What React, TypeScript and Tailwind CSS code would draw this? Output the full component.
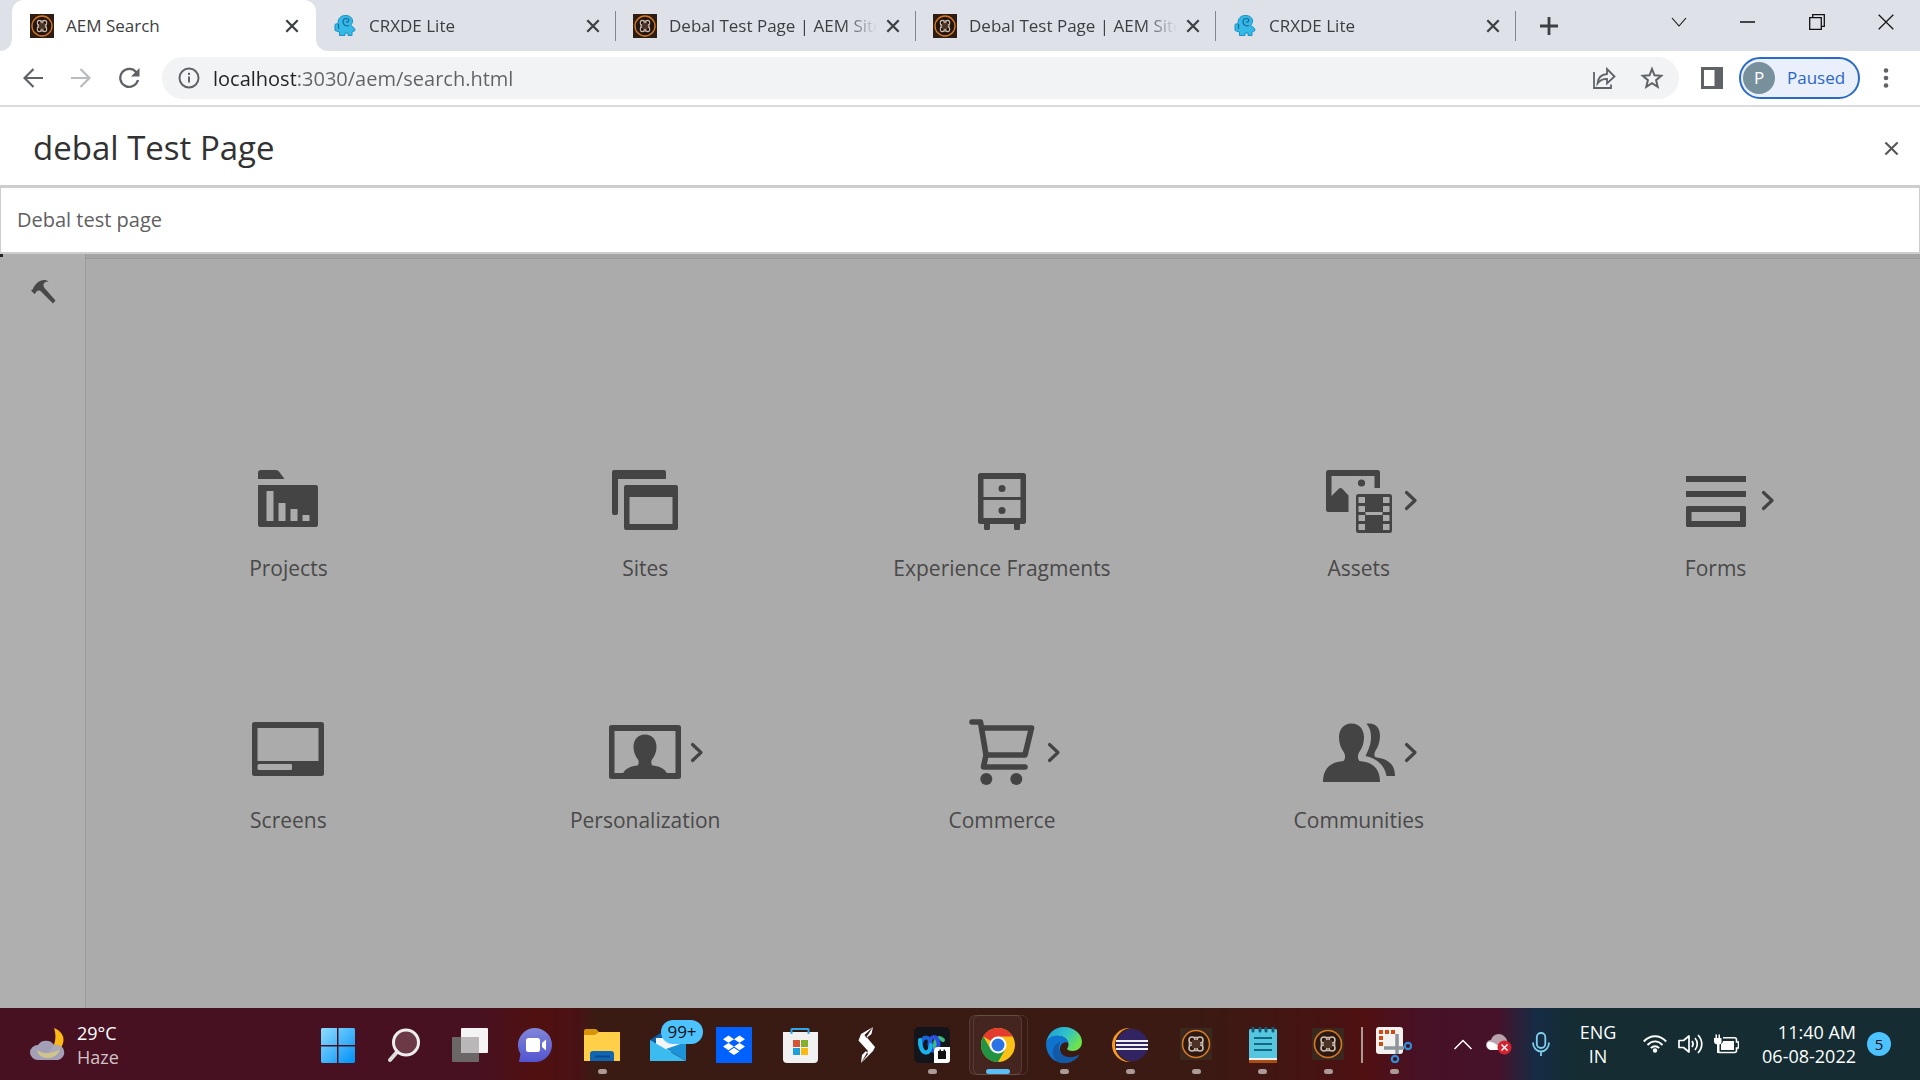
import type { ReactNode } from "react";

const AemFavicon = ({ className }: { className: string }) => (
	<svg viewBox="0 0 24 24" className={className} aria-hidden="true">
		<rect width="24" height="24" fill="#2f1d13" />
		<circle cx="12" cy="12" r="10" fill="#24150f" stroke="#d67a25" strokeWidth="1.3" />
		<g fill="none" stroke="#cdbcae" strokeWidth="1.1">
			<ellipse cx="9.300" cy="8.800" rx="2" ry="2.400" />
			<ellipse cx="14.700" cy="8.800" rx="2" ry="2.400" />
			<ellipse cx="9.300" cy="15.200" rx="2" ry="2.400" />
			<ellipse cx="14.700" cy="15.200" rx="2" ry="2.400" />
			<path d="M8 10v4M16 10v4M10.500 7h3M10.500 17h3" />
		</g>
		<rect x="9.200" y="9.200" width="5.600" height="5.600" fill="#4b3325" />
	</svg>
);

const CrxFavicon = () => (
	<svg viewBox="0 0 24 24" className="h-6 w-6 shrink-0" aria-hidden="true">
		<path
			d="M5 9.500C5 4 8 1.500 12.500 1.500c4.500 0 7 2.500 7 5.500 0 2-1 3.500-2 4.500 2.500 1 4.500 3 4.500 5l-3 1.500v3.500h-4V19h-3v2.500H6.500V18L2 16.500v-6c1-1 2-.5 3-1z"
			fill="#35b9e6"
			stroke="#1c8fc4"
			strokeWidth="1"
		/>
		<path
			d="M16 11.500c-3 1-6-.5-6-3.500 0-2 1.500-3.500 3.500-3.500s3 2 1.800 3.200c-.8.8-2 .3-2-.5M5.500 10v5"
			fill="none"
			stroke="#17699c"
			strokeWidth="1.200"
		/>
	</svg>
);

const Cross = ({ size, stroke }: { size: number; stroke: number }) => (
	<svg width={size} height={size} viewBox="0 0 16 16" aria-hidden="true">
		<path d="M1.500 1.500l13 13M14.500 1.500l-13 13" stroke="currentColor" strokeWidth={stroke} />
	</svg>
);

const tabs = [
	{ title: "CRXDE Lite", crx: true },
	{ title: "Debal Test Page | AEM Sites", crx: false },
	{ title: "Debal Test Page | AEM Sites", crx: false },
	{ title: "CRXDE Lite", crx: true },
];

function TabStrip() {
	return (
		<div className="flex h-[51px] bg-[#dee1e8] text-[17px] text-[#3c4043]">
			<div className="w-3 h-3 self-end bg-white">
				<div className="h-3 bg-[#dee1e8] rounded-br-xl" />
			</div>
			<div className="flex w-[304px] items-center gap-3 rounded-t-xl bg-white py-2 pl-[18px] pr-3">
				<AemFavicon className="h-6 w-6 shrink-0" />
				<span className="flex-1 whitespace-nowrap">AEM Search</span>
				<button type="button" aria-label="Close tab" className="flex h-6 w-6 items-center justify-center">
					<Cross size={14} stroke={2.6} />
				</button>
			</div>
			{tabs.map((tab, i) => (
				<div key={i} className="relative flex w-[300px] items-center gap-3 pl-[17px] pr-3">
					{i === 0 && (
						<div className="absolute bottom-0 left-0 h-3 w-3 bg-white">
							<div className="h-3 rounded-bl-xl bg-[#dee1e8]" />
						</div>
					)}
					{tab.crx ? <CrxFavicon /> : <AemFavicon className="h-6 w-6 shrink-0" />}
					<span className="w-[208px] shrink-0 overflow-hidden whitespace-nowrap [mask-image:linear-gradient(90deg,#000_84%,transparent)]">
						{tab.title}
					</span>
					<button type="button" aria-label="Close tab" className="-ml-2 flex h-6 w-6 shrink-0 items-center justify-center">
						<Cross size={14} stroke={2.6} />
					</button>
					<span className="absolute right-0 h-[30px] w-px bg-[#80868b]" />
				</div>
			))}
			<button type="button" aria-label="New tab" className="flex w-[66px] items-center justify-center">
				<svg width="18" height="18" viewBox="0 0 18 18">
					<path d="M9 0v18M0 9h18" stroke="#3c4043" strokeWidth="2.800" />
				</svg>
			</button>
			<div className="ml-auto flex h-[43px] text-[#111]">
				<button type="button" aria-label="Search tabs" className="flex w-[69px] items-center justify-center">
					<svg width="16" height="10" viewBox="0 0 16 10">
						<path d="M1 1l7 8 7-8" fill="none" stroke="currentColor" strokeWidth="1.100" />
					</svg>
				</button>
				<button type="button" aria-label="Minimize" className="flex w-[69px] items-center justify-center">
					<svg width="15" height="2" viewBox="0 0 15 2">
						<path d="M0 1h15" stroke="currentColor" strokeWidth="1.500" />
					</svg>
				</button>
				<button type="button" aria-label="Restore" className="flex w-[69px] items-center justify-center">
					<svg width="16" height="16" viewBox="0 0 16 16">
						<path d="M.7 3.700h11.600v11.600H.7zM3.700 3.500V.7h11.600v11.600h-3" fill="none" stroke="currentColor" strokeWidth="1.300" />
					</svg>
				</button>
				<button type="button" aria-label="Close window" className="flex w-[69px] items-center justify-center">
					<Cross size={18} stroke={1.1} />
				</button>
			</div>
		</div>
	);
}

function Toolbar() {
	return (
		<div className="flex h-14 items-center border-b-2 border-[#dadce0] bg-white pl-[9px] pr-2 text-[#5f6368]">
			<button type="button" aria-label="Back" className="flex w-12 justify-center">
				<svg width="20" height="20" viewBox="0 0 20 20" fill="none" stroke="currentColor" strokeWidth="2.200">
					<path d="M20 10H2M10.500 1L1.500 10l9 9" />
				</svg>
			</button>
			<button type="button" aria-label="Forward" disabled className="flex w-12 justify-center text-[#b9bbbe]">
				<svg width="20" height="20" viewBox="0 0 20 20" fill="none" stroke="currentColor" strokeWidth="2.200">
					<path d="M0 10h18M9.500 1l9 9-9 9" />
				</svg>
			</button>
			<button type="button" aria-label="Reload" className="flex w-12 justify-center">
				<svg width="22" height="22" viewBox="0 0 22 22" fill="none" stroke="currentColor" strokeWidth="2.300">
					<path d="M18.500 5.500A9 9 0 1 0 20 13" />
					<path d="M21.500 1v8.500H13z" fill="currentColor" stroke="none" />
				</svg>
			</button>
			<div className="ml-[9px] flex h-[42px] flex-1 items-center rounded-full bg-[#f1f3f4] pl-4 pr-3">
				<svg width="22" height="22" viewBox="0 0 22 22" fill="none" stroke="currentColor" strokeWidth="2">
					<circle cx="11" cy="11" r="9.500" />
					<path d="M11 9.500v6M11 5.800v2.200" />
				</svg>
				<input
					aria-label="Address"
					defaultValue="localhost:3030/aem/search.html"
					className="ml-[13px] min-w-0 flex-1 bg-[linear-gradient(90deg,#202124_83px,#5f6368_83px)] bg-clip-text pt-0.5 text-[20px] leading-8 text-transparent outline-none"
				/>
				<button type="button" aria-label="Share" className="flex w-12 justify-center">
					<svg width="24" height="24" viewBox="0 0 24 24" fill="none" stroke="currentColor" strokeWidth="1.800">
						<path d="M2 6v16h17v-3.500" />
						<path d="M5.500 17.500c.5-5.500 3.500-9 9.500-9.500V3l7.500 7.500L15 17.500v-4.700c-4 0-7 1.200-9.500 4.700z" />
					</svg>
				</button>
				<button type="button" aria-label="Bookmark" className="ml-3 mr-[3px] flex w-6 justify-center">
					<svg width="24" height="24" viewBox="0 0 24 24" fill="none" stroke="currentColor" strokeWidth="2">
						<path d="M12 3l2.500 6.300 6.700.5-5.100 4.400 1.600 6.600L12 17.200l-5.700 3.600 1.600-6.600-5.100-4.400 6.700-.5z" />
					</svg>
				</button>
			</div>
			<button type="button" aria-label="Side panel" className="ml-[22px] flex w-[22px] justify-center">
				<svg width="22" height="22" viewBox="0 0 22 22">
					<path d="M0 0h22v22H0zM3 3v16h10.500V3z" fill="currentColor" fillRule="evenodd" />
				</svg>
			</button>
			<button
				type="button"
				className="ml-4 flex h-[42px] w-[121px] items-center gap-3 rounded-full border-2 border-[#2a6bc9] bg-[#e9f0fc] pl-0.5 text-[17px] text-[#2a66c8]"
			>
				<span className="flex h-8 w-8 items-center justify-center rounded-full bg-[#78909c] text-white">P</span>
				Paused
			</button>
			<button type="button" aria-label="Menu" className="flex w-[52px] justify-center">
				<svg width="6" height="20" viewBox="0 0 6 20" fill="currentColor">
					<circle cx="3" cy="2.500" r="2.300" />
					<circle cx="3" cy="10" r="2.300" />
					<circle cx="3" cy="17.500" r="2.300" />
				</svg>
			</button>
		</div>
	);
}

const apps: { label: string; more?: boolean; icon: ReactNode }[] = [
	{
		label: "Projects",
		icon: (
			<>
				<path d="M6 15V9q0-3 3-3h15q2 0 3 1.500L32.500 15z" />
				<path
					fillRule="evenodd"
					d="M6 21h57.500q2.500 0 2.500 2.500v37q0 2.500-2.500 2.500h-55Q6 63 6 60.500zM14.500 27v30h7V27zM26.500 39v18h7V39zM38.500 45v12h7V45zM50.500 51v6h7v-6z"
				/>
			</>
		),
	},
	{
		label: "Sites",
		icon: (
			<>
				<path d="M5 6h50q2 0 2 2v7H9v34q0 2-2 2H5q-2 0-2-2V8q0-2 2-2z" />
				<path fillRule="evenodd" d="M17 21h50q2 0 2 2v41q0 2-2 2H17q-2 0-2-2V23q0-2 2-2zM20.500 33v27h43V33z" />
			</>
		),
	},
	{
		label: "Experience Fragments",
		icon: (
			<>
				<path
					fillRule="evenodd"
					d="M14.500 9h43q2.500 0 2.500 2.500v46q0 2.500-2.500 2.500H54v4.500q0 1.500-1.500 1.500h-3q-1.500 0-1.500-1.500V60H24v4.500q0 1.500-1.500 1.500h-3q-1.500 0-1.500-1.500V60h-3.500Q12 60 12 57.500v-46Q12 9 14.500 9zM17.500 15v18h37V15zM17.500 36v18h37V36z"
				/>
				<circle cx="36" cy="24.500" r="3.500" />
				<circle cx="36" cy="46.500" r="3.500" />
			</>
		),
	},
	{
		label: "Assets",
		more: true,
		icon: (
			<>
				<path d="M5.500 6h49Q57 6 57 8.500V24h-5.500V12h-43v20l7-7q2-2 4 0l6 6.500V48H5.500Q3 48 3 45.500v-37Q3 6 5.500 6z" />
				<circle cx="38.500" cy="19" r="3.600" />
				<path
					fillRule="evenodd"
					d="M35.500 30h31q2.500 0 2.500 2.500v34q0 2.500-2.500 2.500h-31Q33 69 33 66.500v-34q0-2.500 2.500-2.500zM35.500 33v6h6.500v-6zM35.500 42v6h6.500v-6zM35.500 51v6h6.500v-6zM35.500 60v6h6.500v-6zM60 33v6h6.500v-6zM60 42v6h6.500v-6zM60 51v6h6.500v-6zM60 60v6h6.500v-6zM42.500 48v3h17v-3z"
				/>
			</>
		),
	},
	{
		label: "Forms",
		more: true,
		icon: (
			<>
				<path d="M6 12h60v6H6zM6 27h60v6H6z" />
				<path fillRule="evenodd" d="M7.500 42h57q1.500 0 1.500 1.500v18q0 1.500-1.500 1.500h-57Q6 63 6 61.500v-18Q6 42 7.500 42zM11.500 48v9H60v-9z" />
			</>
		),
	},
	{
		label: "Screens",
		icon: (
			<path
				fillRule="evenodd"
				d="M2.500 6h67Q72 6 72 8.500v49q0 2.500-2.500 2.500h-67Q0 60 0 57.500v-49Q0 6 2.500 6zM5.500 12v33h61V12zM7 48q-1.500 0-1.500 1.500v3Q5.500 54 7 54h32q1 0 1-1v-4q0-1-1-1z"
			/>
		),
	},
	{
		label: "Personalization",
		more: true,
		icon: (
			<>
				<path fillRule="evenodd" d="M2.500 9h67Q72 9 72 11.500v49q0 2.500-2.500 2.500h-67Q0 63 0 60.500v-49Q0 9 2.500 9zM5.500 15v42h61V15z" />
				<path d="M36 18.500c-7 0-11.500 5-11.500 12.500 0 5 2 9.500 4.500 12.500 1 1.500 1 4.500-.5 6-6 .5-12 2.500-14.500 8h44c-2.500-5.500-8.500-7.500-14.500-8-1.500-1.500-1.500-4.500-.5-6 2.500-3 4.500-7.500 4.500-12.500 0-7.500-4.500-12.500-11.500-12.500z" />
			</>
		),
	},
	{
		label: "Commerce",
		more: true,
		icon: (
			<>
				<g fill="none" stroke="currentColor" strokeWidth="5.600" strokeLinecap="round" strokeLinejoin="round">
					<path d="M6 6h8.500L20 39h39l6.500-27H16.500M20 39l-2.500 12H59" />
				</g>
				<circle cx="20.300" cy="63" r="6" />
				<circle cx="50.300" cy="63" r="6" />
			</>
		),
	},
	{
		label: "Communities",
		more: true,
		icon: (
			<>
				<path d="M28.500 7.500c-7.500 0-12.500 5.500-12.500 14 0 6 2 11 5 15 1.500 2.500 1.500 6-.5 8.500C8 46 0 52 0 66h57c0-14-8-20-20.500-21-2-2.500-2-6-.5-8.500 3-4 5-9 5-15 0-8.500-5-14-12.500-14z" />
				<path d="M43.500 7.800c9-1.500 13.500 4 13.500 12 0 6.500-2 11-4.500 15-1.500 2.500-1.500 5 0 6.500C65 43 72 48 72 60h-8.500C62 50 54 42 42.500 40c4-8 5.500-13 5.500-19 0-5.500-1.500-10-4.500-13.200z" />
			</>
		),
	},
];

function SearchOverlay() {
	return (
		<div className="bg-white">
			<div className="flex h-[78px] items-center pl-[33px] pr-[17px] pt-1">
				<input
					aria-label="Search"
					defaultValue="debal Test Page"
					className="min-w-0 flex-1 text-[33px] leading-[48px] text-[#323232] outline-none"
				/>
				<button type="button" aria-label="Close search" className="flex h-6 w-6 items-center justify-center text-[#555]">
					<Cross size={15} stroke={2.2} />
				</button>
			</div>
			<button
				type="button"
				className="block h-[69px] w-full border border-b-2 border-t-3 border-[#cdcdcd] pl-4 text-left text-[20px] text-[#606060]"
			>
				Debal test page
			</button>
		</div>
	);
}

function Navigation() {
	return (
		<main className="flex flex-1 bg-[#ababab]">
			<nav className="relative w-[86px] shrink-0 border-r border-[#9b9b9b] bg-[#afafaf]">
				<span className="absolute left-0 top-0 h-[3px] w-[3px] bg-[#222]" />
				<button type="button" aria-label="Tools" className="ml-[31px] mt-[26px] block text-[#484848]">
					<svg width="25" height="24" viewBox="0 0 25 24" fill="currentColor">
						<path d="M0 10.500L2 9l.5-1.500C5 3 9 0 13 0c1.800 0 3 .5 4.500 1.500-3 0-4.500 1-5 3-.2 1.500.3 2.500 1 3.500L24.500 20.500l-2.500 3L9.500 11c-1.500-.8-3-.3-4 .5l-.5 1-1.500 1.500z" />
					</svg>
				</button>
			</nav>
			<div className="flex-1">
				<div className="h-[5px] border-b border-[#9b9b9b] bg-[#a4a4a4]" />
				<ul className="grid grid-cols-5 gap-y-[134px] pl-6 pr-[26px] pt-[205px]">
					{apps.map((app) => (
						<li key={app.label}>
							<a href="#" className="flex flex-col items-center text-[#494949]">
								<span className="relative text-[#444]">
									<svg width="72" height="72" viewBox="0 0 72 72" fill="currentColor" aria-hidden="true">
										{app.icon}
									</svg>
									{app.more && (
										<svg
											className="absolute left-20 top-6"
											width="16"
											height="25"
											viewBox="0 0 16 25"
											fill="none"
											stroke="currentColor"
											strokeWidth="3.200"
											strokeLinecap="round"
											strokeLinejoin="round"
										>
											<path d="M3.500 4.500l8.500 8-8.500 8" />
										</svg>
									)}
								</span>
								<span className="mt-[18px] whitespace-nowrap text-[21px] leading-7">{app.label}</span>
							</a>
						</li>
					))}
				</ul>
			</div>
		</main>
	);
}

const pinned: { name: string; running?: boolean; active?: boolean; icon: ReactNode }[] = [
	{
		name: "Start",
		icon: (
			<>
				<defs>
					<linearGradient id="win" x2="1" y2="1">
						<stop stopColor="#8fdcff" />
						<stop offset="1" stopColor="#0091f7" />
					</linearGradient>
				</defs>
				<path d="M2 1h15v17H1V2zM18.500 1H34l1 1v16H18.500zM1 19.500h16V36H2l-1-1zM18.500 19.500H35V35l-1 1H18.500z" fill="url(#win)" />
			</>
		),
	},
	{
		name: "Search",
		icon: (
			<>
				<path d="M11 25L4 33" stroke="#ddd" strokeWidth="4" strokeLinecap="round" />
				<circle cx="20" cy="15.500" r="12.500" fill="#6b3a46" stroke="#eee" strokeWidth="3" />
			</>
		),
	},
	{
		name: "Task view",
		icon: (
			<>
				<rect x="9" y="1" width="27" height="25" rx="1" fill="#f4f4f4" />
				<rect x="0" y="10" width="27" height="25" rx="1" fill="#6c6767" />
				<path d="M9 10h18v16H9z" fill="#b9b7b7" />
			</>
		),
	},
	{
		name: "Chat",
		icon: (
			<>
				<defs>
					<linearGradient id="chat" x2="0" y2="1">
						<stop stopColor="#8086d8" />
						<stop offset="1" stopColor="#5355cf" />
					</linearGradient>
				</defs>
				<path d="M1 35l1.500-8A17 17 0 1 1 18 35z" fill="url(#chat)" />
				<rect x="8" y="11" width="14" height="14" rx="2.500" fill="#fff" />
				<path d="M24 16l4-3.500v11L24 20z" fill="#fff" />
			</>
		),
	},
	{
		name: "File Explorer",
		running: true,
		icon: (
			<>
				<path d="M0 4q0-2 2-2h10l4 4v6H0z" fill="#d9950a" />
				<path d="M0 8h11l4-3h21v29H0z" fill="#ffcf48" />
				<path d="M6 34V27q0-3 3-3h18q3 0 3 3v7z" fill="#1166b4" />
				<path d="M11 29.500h15" stroke="#0a4a8c" strokeWidth="2" />
			</>
		),
	},
	{
		name: "Mail",
		icon: (
			<>
				<path d="M0 13L15 3h8l13 10v8H0z" fill="#0f5ea8" />
				<path d="M6 11h24v10l-12 6L6 17z" fill="#f2f5f8" />
				<path d="M0 13l36 21H0z" fill="#3bbcf0" />
				<path d="M36 15v19L16 22z" fill="#1c93d8" />
			</>
		),
	},
	{
		name: "Dropbox",
		icon: (
			<>
				<path d="M0 0h36v36H0z" fill="#0061fe" />
				<path
					d="M12.500 8.500l5.500 3.700-5.500 3.600L7 12.200zM23.500 8.500l5.500 3.700-5.500 3.600-5.500-3.600zM12.500 16l5.500 3.600-5.500 3.600L7 19.600zM23.500 16l5.500 3.600-5.500 3.600-5.500-3.600zM18 20.800l5.500 3.600L18 28l-5.500-3.600z"
					fill="#fff"
				/>
			</>
		),
	},
	{
		name: "Microsoft Store",
		icon: (
			<>
				<path d="M1 5h35v27q0 4-4 4H5q-4 0-4-4z" fill="#f1f1f1" />
				<path d="M9.500 7V2.500q0-.5.5-.5h16q.5 0 .5.500V7" fill="none" stroke="#2ba7e6" strokeWidth="2" />
				<path d="M11 13h7v7h-7z" fill="#d4553a" />
				<path d="M19 13h7v7h-7z" fill="#84b02e" />
				<path d="M11 21h7v7h-7z" fill="#1ba0dc" />
				<path d="M19 21h7v7h-7z" fill="#fbb811" />
			</>
		),
	},
	{
		name: "Skyline",
		icon: (
			<path d="M25 0L13 7l-2.500 6.500L20 24l-7 12 12-12 2-4-8.500-10zM25 0l-1.500 7-5 4-2-3zM13 36l1-8 4-4 2 3z" fill="#fff" />
		),
	},
	{
		name: "Webex",
		running: true,
		icon: (
			<>
				<rect width="36" height="36" rx="5" fill="#14151a" />
				<g fill="none" strokeWidth="4" strokeLinecap="round">
					<path d="M29 13c-4-4-8-1-8 5 0 3-1 5-3 5" stroke="#3dbb7c" />
					<ellipse cx="20" cy="17" rx="4.500" ry="7" stroke="#2b4fe6" />
					<ellipse cx="12" cy="18" rx="5" ry="7.500" stroke="#1c62d8" />
					<path d="M6 13c-.5 6 2 12.500 6 12.500 3 0 4.500-4 4.800-7.500" stroke="#18b4e8" />
				</g>
				<path d="M24 20h12v13q0 3-3 3H20V24q0-4 4-4z" fill="#fff" />
				<path d="M24 24h8v8h-8zM25.500 22.500h1.500v2h-1.500zM29.500 22.500H31v2h-1.500z" fill="#111" />
			</>
		),
	},
	{
		name: "Chrome",
		active: true,
		icon: (
			<>
				<circle cx="18" cy="18" r="17" fill="#fbc116" />
				<path d="M18 18L3.300 9.500A17 17 0 0 1 32.700 9.500H18z" fill="#e33b2e" />
				<path d="M3.300 9.500A17 17 0 0 0 18 35l7.400-12.800L18 26 10.600 22z" fill="#229342" />
				<circle cx="18" cy="18" r="8.500" fill="#fff" />
				<circle cx="18" cy="18" r="6.500" fill="#2a74e8" />
			</>
		),
	},
	{
		name: "Edge",
		running: true,
		icon: (
			<>
				<defs>
					<linearGradient id="edge" x2="1" y2=".5">
						<stop stopColor="#1598dc" />
						<stop offset=".6" stopColor="#33c6c6" />
						<stop offset="1" stopColor="#6ee34a" />
					</linearGradient>
				</defs>
				<path d="M0 17C1 7 8 0 18 0s18 7 18 15c0 6-5 9-9.500 9-3.500 0-5.500-1.500-5.500-2.500 1-1 1.500-2.500 1.500-4C22.500 12 17 8.500 11 9 5 9.500 1 13 0 17z" fill="url(#edge)" />
				<path d="M0 17c1-5 5-8.500 11-8.500 6 0 11 3.500 11.500 8C21 14 14 15 14 22c0 5 4 9 10 9 4 0 7-2 9.500-3.500C30 33 25 36 18 36 8 36 0 28 0 17z" fill="#0e74d0" />
				<path d="M14 35.500C8 33 6 28 7 23c.7-3.500 3-7 7.500-8-3 4-1.500 8 0 10.500 3.500 5 11 6.500 19 2C30 33 22 37.500 14 35.500z" fill="#1459a6" />
			</>
		),
	},
	{
		name: "Eclipse",
		running: true,
		icon: (
			<>
				<circle cx="17" cy="18" r="17" fill="#f79a26" />
				<circle cx="20" cy="18" r="17" fill="#3e1b12" />
				<circle cx="20" cy="18" r="16" fill="#322463" />
				<path d="M4 14h32M4 18h32M4 22h32" stroke="#f3f1f8" strokeWidth="2" />
			</>
		),
	},
	{ name: "AEM author", running: true, icon: <AemTile /> },
	{
		name: "Notepad",
		running: true,
		icon: (
			<>
				<path d="M5 32h28v4H5z" fill="#a94f14" />
				<path d="M5 30h28v3H5z" fill="#eee" />
				<path d="M6 2h26l1 1v28H5V3z" fill="#56c6e0" />
				<path d="M10 11h18M10 17h18M10 23h18" stroke="#11697f" strokeWidth="2" />
				<path d="M9 1v3M16 1v3M22 1v3M29 1v3" stroke="#115d78" strokeWidth="3" strokeLinecap="round" />
			</>
		),
	},
	{ name: "AEM publish", running: true, icon: <AemTile /> },
	{
		name: "Snipping Tool",
		running: true,
		icon: (
			<>
				<rect width="27" height="27" rx="3" fill="#f4f2f1" />
				<path d="M3 3h4v4H3zM9 3h4v4H9zM15 3h4v4h-4zM3 9h4v4H3zM3 15h4v4H3z" fill="#cf4a17" />
				<path d="M21 7v20M8 21h20" stroke="#8d959b" strokeWidth="3.500" />
				<circle cx="19" cy="32" r="3.200" fill="none" stroke="#2e8fd8" strokeWidth="2.200" />
				<circle cx="32" cy="19" r="3.200" fill="none" stroke="#2e8fd8" strokeWidth="2.200" />
			</>
		),
	},
];

function AemTile() {
	return (
		<>
			<rect x="2" y="1" width="32" height="32" fill="#3a271d" />
			<circle cx="18" cy="17" r="13.500" fill="#2b1912" stroke="#d67a25" strokeWidth="1.600" />
			<g fill="none" stroke="#cdbcae" strokeWidth="1.600">
				<circle cx="14" cy="13" r="3" />
				<circle cx="22" cy="13" r="3" />
				<circle cx="14" cy="21" r="3" />
				<circle cx="22" cy="21" r="3" />
				<path d="M11.500 15v4M24.500 15v4M16 10.500h4M16 23.500h4" />
			</g>
			<rect x="14" y="13" width="8" height="8" fill="#4b3325" />
		</>
	);
}

function Taskbar() {
	return (
		<footer className="flex h-[72px] bg-[linear-gradient(90deg,#481121_0%,#481121_25%,#50100f_28%,#4a1115_30%,#391b13_31%,#3a1a13_62%,#471313_69%,#501012_71%,#471126_74%,#45122a_78%,#152c45_80%,#142c32_82%,#142c32_100%)] text-white">
			<button type="button" className="flex w-[305px] items-center gap-[11px] pl-[30px] text-left text-[18px] leading-6">
				<svg width="36" height="36" viewBox="0 0 36 36">
					<path d="M24 2c8 3 12 10 8 18-3 6-10 9-16 7 7-2 12-13 8-25z" fill="#fcb814" />
					<path d="M8 34a8 7.500 0 0 1 0-15 9 8 0 0 1 16 0 8 7.500 0 0 1 4 15z" fill="#a9a8c0" opacity=".95" />
					<path d="M7 24c5 4 15 5 23-1-1 5-6 9-12 9S8 29 7 24z" fill="#d2c58a" />
				</svg>
				<span className="pt-0.5">
					29°C
					<br />
					<span className="text-[#d3c2c7]">Haze</span>
				</span>
			</button>
			<div className="flex">
				{pinned.map((item) => (
					<div key={item.name} className="relative flex">
						{item.name === "Snipping Tool" && <span className="absolute left-0 top-[19px] h-9 w-0.5 bg-[#a99a97]" />}
						{item.active && (
							<>
								<span className="absolute left-2 top-[7px] h-[60px] w-[55px] rounded-md border border-white/10" />
								<span className="absolute left-1 top-[7px] h-[60px] w-[53px] rounded-md border border-white/10 bg-white/5" />
							</>
						)}
						<button type="button" aria-label={item.name} className="relative flex w-[66px] justify-center pt-[19px]">
							<svg width="36" height="36" viewBox="0 0 36 36">
								{item.icon}
							</svg>
							{item.name === "Mail" && (
								<span className="absolute left-[26px] top-3 flex h-6 w-[42px] items-center justify-center rounded-full bg-[#4cc2ff] text-[17px] text-[#111]">
									99+
								</span>
							)}
							{item.running && <span className="absolute bottom-1.5 h-[5px] w-[9px] rounded-full bg-[#ab9a95]" />}
							{item.active && <span className="absolute bottom-1.5 h-[5px] w-6 rounded-full bg-[#5bbdf5]" />}
						</button>
					</div>
				))}
			</div>
			<div className="ml-auto flex items-center pr-[29px] text-[18px] leading-6">
				<button type="button" aria-label="Show hidden icons" className="flex w-9 justify-center">
					<svg width="18" height="11" viewBox="0 0 18 11" fill="none" stroke="#fff" strokeWidth="1.500">
						<path d="M.5 10L9 1.500l8.500 8.500" />
					</svg>
				</button>
				<button type="button" aria-label="OneDrive" className="flex w-9 justify-center">
					<svg width="26" height="24" viewBox="0 0 26 24">
						<path d="M5 18a5 5 0 0 1 0-10 8 8 0 0 1 14-3c3 3 3 8 3 13z" fill="#b7a2ab" />
						<path d="M5 18a5 5 0 0 1-3-8c5-1 10 3 14 8z" fill="#fff" />
						<circle cx="18.500" cy="15.500" r="7" fill="#d32330" />
						<path d="M15.500 12.500l6 6M21.500 12.500l-6 6" stroke="#fff" strokeWidth="1.500" />
					</svg>
				</button>
				<button type="button" aria-label="Microphone" className="flex w-12 justify-center">
					<svg width="18" height="24" viewBox="0 0 18 24" fill="none" stroke="#7fcfee" strokeWidth="1.800">
						<rect x="4.800" y="1" width="8.500" height="15" rx="4.200" />
						<path d="M1 10.500c0 5 3.500 9 8 9s8-4 8-9M9 19.500V24" />
					</svg>
				</button>
				<button type="button" className="w-[66px] text-center">
					ENG
					<br />
					IN
				</button>
				<button type="button" aria-label="Network, volume and battery" className="ml-1.5 flex w-[108px] items-center justify-between px-1.5">
					<svg width="24" height="18" viewBox="0 0 24 18" fill="none" stroke="#fff" strokeWidth="1.900">
						<path d="M.8 6.500c6.500-7 16-7 22.400 0M4.500 10c4.500-4.800 10.500-4.800 15 0M7.800 13.200c2.500-2.700 6-2.700 8.400 0" />
						<circle cx="12" cy="15.500" r="2.200" fill="#fff" stroke="none" />
					</svg>
					<svg width="25" height="20" viewBox="0 0 25 20" fill="none" stroke="#fff" strokeWidth="1.700" strokeLinejoin="round">
						<path d="M1 6.500h4.500L11 2v16l-5.500-4.500H1zM14 7c1.500 2 1.500 4 0 6M17 4c3 3.500 3 8.500 0 12M20 1c5 5.500 5 12.500 0 18" />
					</svg>
					<svg width="25" height="20" viewBox="0 0 25 20" fill="#fff">
						<path d="M0 4h1.500V.5H3V4h1.500V.5H6V4h1.500v4q0 2-2 2.500V19H3v-8.500Q0 10 0 7z" />
						<path d="M9 7h11v9H7v-6q2-1 2-3z" />
						<path d="M9 3.700h11.500q2 0 2 2V8h2v6h-2v2.500q0 2-2 2H5" fill="none" stroke="#fff" strokeWidth="1.600" />
					</svg>
				</button>
				<button type="button" className="flex items-center gap-[11px] pl-[17px] text-right">
					<span>
						11:40 AM
						<br />
						06-08-2022
					</span>
					<span className="flex h-6 w-6 items-center justify-center rounded-full bg-[#4cc2ff] text-[15px] text-[#111]">5</span>
				</button>
			</div>
		</footer>
	);
}

export default function App() {
	return (
		<div className="flex min-h-screen flex-col font-['Open_Sans','Noto_Sans',sans-serif]">
			<header>
				<TabStrip />
				<Toolbar />
			</header>
			<SearchOverlay />
			<Navigation />
			<Taskbar />
		</div>
	);
}
